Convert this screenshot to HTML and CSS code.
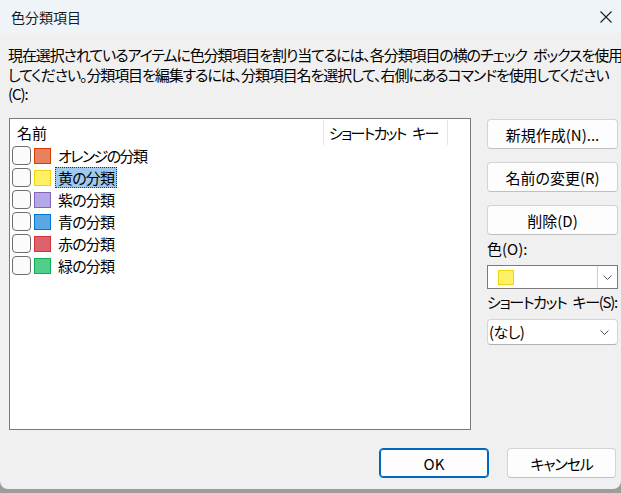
FILE: index.html
```html
<!DOCTYPE html>
<html lang="ja">
<head>
  <meta charset="UTF-8" />
  <title>色分類項目</title>
  <link rel="stylesheet" href="styles.css">
</head>
<body>
  <div class="window">
    <div class="titlebar">
      <span class="title">色分類項目</span>
      <svg class="close" width="12" height="12" viewBox="0 0 12 12">
        <path d="M0.5 0.5 L11.5 11.5 M11.5 0.5 L0.5 11.5" stroke="#1b1b1b" stroke-width="1.1" fill="none"/>
      </svg>
    </div>

    <div class="content">
      <p class="desc">
        <span class="line">現在選択されているアイテムに色分類項目を割り当てるには、各分類項目の横のチェック ボックスを使用</span>
        <span class="line">してください。分類項目を編集するには、分類項目名を選択して、右側にあるコマンドを使用してください</span>
        <span class="line line-last">(C):</span>
      </p>

      <div class="main">
        <div class="list">
          <div class="list-head">
            <div class="col col-name">名前</div>
            <div class="col col-key">ショートカット キー</div>
          </div>

          <div class="row">
            <span class="check"></span>
            <span class="swatch orange"></span>
            <span class="label label-kana">オレンジの分類</span>
          </div>
          <div class="row">
            <span class="check"></span>
            <span class="swatch yellow"></span>
            <span class="label selected">黄の分類</span>
          </div>
          <div class="row">
            <span class="check"></span>
            <span class="swatch purple"></span>
            <span class="label">紫の分類</span>
          </div>
          <div class="row">
            <span class="check"></span>
            <span class="swatch blue"></span>
            <span class="label">青の分類</span>
          </div>
          <div class="row">
            <span class="check"></span>
            <span class="swatch red"></span>
            <span class="label">赤の分類</span>
          </div>
          <div class="row">
            <span class="check"></span>
            <span class="swatch green"></span>
            <span class="label">緑の分類</span>
          </div>
        </div>

        <div class="side">
          <button class="btn">新規作成(N)...</button>
          <button class="btn">名前の変更(R)</button>
          <button class="btn btn-last">削除(D)</button>

          <div class="field-label">色(O):</div>
          <div class="combo combo-color">
            <span class="swatch yellow combo-swatch"></span>
            <span class="drop-btn">
              <svg width="9" height="5" viewBox="0 0 9 5"><path d="M0.5 0.5 L4.5 4.5 L8.5 0.5" stroke="#555" stroke-width="1" fill="none"/></svg>
            </span>
          </div>

          <div class="field-label field-label-2">ショートカット キー(S):</div>
          <div class="combo combo-key">
            <span class="combo-text">(なし)</span>
            <svg class="chev" width="9" height="5" viewBox="0 0 9 5"><path d="M0.5 0.5 L4.5 4.5 L8.5 0.5" stroke="#555" stroke-width="1" fill="none"/></svg>
          </div>
        </div>
      </div>

      <div class="footer">
        <button class="btn-dlg btn-ok">OK</button>
        <button class="btn-dlg btn-kana">キャンセル</button>
      </div>
    </div>
  </div>
</body>
</html>
```

FILE: styles.css
```css
* {
  margin: 0;
  padding: 0;
  box-sizing: border-box;
}

html, body {
  width: 621px;
  height: 493px;
  overflow: hidden;
}

body {
  background: #9d9d9d;
  font-family: "Noto Sans CJK JP", "Noto Sans", sans-serif;
  font-size: 15px;
  color: #000;
  font-feature-settings: "palt";
}

.window {
  width: 621px;
  height: 489px;
  background: #f0f0f0;
  border-radius: 0 0 8px 8px;
  overflow: hidden;
}

/* Barre de titre */
.titlebar {
  height: 33px;
  background: #eff4f9;
  display: flex;
  align-items: center;
  justify-content: space-between;
  padding: 0 9px 0 11px;
}

.title {
  font-size: 14px;
  line-height: 20px;
  color: #1b1b1b;
}

.close {
  display: block;
}

.content {
  padding: 12px 0 0 0;
}

.desc {
  padding: 0 8px;
  line-height: 20px;
  white-space: nowrap;
  height: 60px;
}

.desc .line {
  display: block;
  letter-spacing: -1.1px;
  word-spacing: 4px;
}

.desc .line-last {
  line-height: 18px;
}

/* Liste */
.main {
  display: flex;
  gap: 16px;
  padding-left: 9px;
  margin-top: 13px;
}

.list {
  width: 462px;
  height: 312px;
  background: #fff;
  border: 1px solid #7a7a7a;
}

.list-head {
  display: flex;
  height: 26px;
  padding-top: 1px;
}

.col {
  line-height: 26px;
  height: 25px;
  padding-left: 7px;
  border-right: 1px solid #e5e5e5;
  white-space: nowrap;
}

.col-name {
  width: 314px;
}

.col-key {
  width: 124px;
  padding-left: 5px;
  letter-spacing: -1.7px;
  word-spacing: 5px;
}

.row {
  display: flex;
  align-items: flex-start;
  height: 22px;
  padding-left: 2px;
}

.check {
  width: 19px;
  height: 19px;
  margin-top: 1px;
  border: 1px solid #6e6e6e;
  border-radius: 4px;
  background: #fbfbfb;
}

.swatch {
  display: block;
  width: 17px;
  height: 16px;
  margin: 3px 0 0 3px;
  border: 1px solid;
}

.orange { background: #e8825e; border-color: #d83b01; }
.yellow { background: #fff066; border-color: #f2d40b; }
.purple { background: #b3a9e8; border-color: #8764b8; }
.blue   { background: #5aa7e6; border-color: #0078d4; }
.red    { background: #dc626d; border-color: #d13438; }
.green  { background: #4fcf89; border-color: #10b050; }

.label {
  margin-left: 4px;
  padding: 0 2px;
  height: 21px;
  line-height: 19px;
  border: 1px dotted transparent;
  letter-spacing: -0.8px;
  white-space: nowrap;
}

.label-kana {
  letter-spacing: -1.6px;
}

.label.selected {
  background: #9ecaf0;
  border-color: #333;
}

/* Colonne de droite */
.side {
  width: 131px;
  margin-top: 1px;
  display: flex;
  flex-direction: column;
}

.btn {
  height: 30px;
  margin-bottom: 13px;
  font-family: inherit;
  font-size: 15px;
  font-feature-settings: "palt";
  background: #fdfdfd;
  border: 1px solid #d3d3d3;
  border-bottom-color: #c0c0c0;
  border-radius: 4px;
  color: #000;
}

.btn-last {
  margin-bottom: 4px;
}

.field-label {
  line-height: 20px;
  height: 20px;
  white-space: nowrap;
}

.field-label-2 {
  margin-top: 3px;
  letter-spacing: -1.3px;
  word-spacing: 4px;
}

.combo {
  display: flex;
  align-items: center;
  background: #fff;
}

.combo-color {
  height: 24px;
  margin-top: 6px;
  border: 1px solid #7a7a7a;
  justify-content: space-between;
}

.combo-swatch {
  width: 16px;
  height: 15px;
  margin: 0 0 0 10px;
}

.drop-btn {
  width: 20px;
  height: 22px;
  border-left: 1px solid #cfcfcf;
  display: flex;
  align-items: center;
  justify-content: center;
}

.combo-key {
  height: 26px;
  margin-top: 7px;
  border: 1px solid #d5d5d5;
  border-bottom-color: #b0b0b0;
  border-radius: 4px;
  justify-content: space-between;
  padding: 0 8px 0 1px;
}

.combo-text {
  line-height: 24px;
  letter-spacing: -0.6px;
}

/* Boutons du bas */
.footer {
  display: flex;
  justify-content: flex-end;
  gap: 18px;
  padding-right: 5px;
  margin-top: 18px;
}

.btn-dlg {
  width: 109px;
  height: 30px;
  font-family: inherit;
  font-size: 15px;
  font-feature-settings: "palt";
  background: #fdfdfd;
  border: 1px solid #d3d3d3;
  border-bottom-color: #c0c0c0;
  border-radius: 4px;
  color: #000;
}

.btn-kana {
  letter-spacing: -1.2px;
}

.btn-ok {
  width: 110px;
  border-color: #0067c0;
  box-shadow: inset 0 0 0 1px #0067c0;
}
```
